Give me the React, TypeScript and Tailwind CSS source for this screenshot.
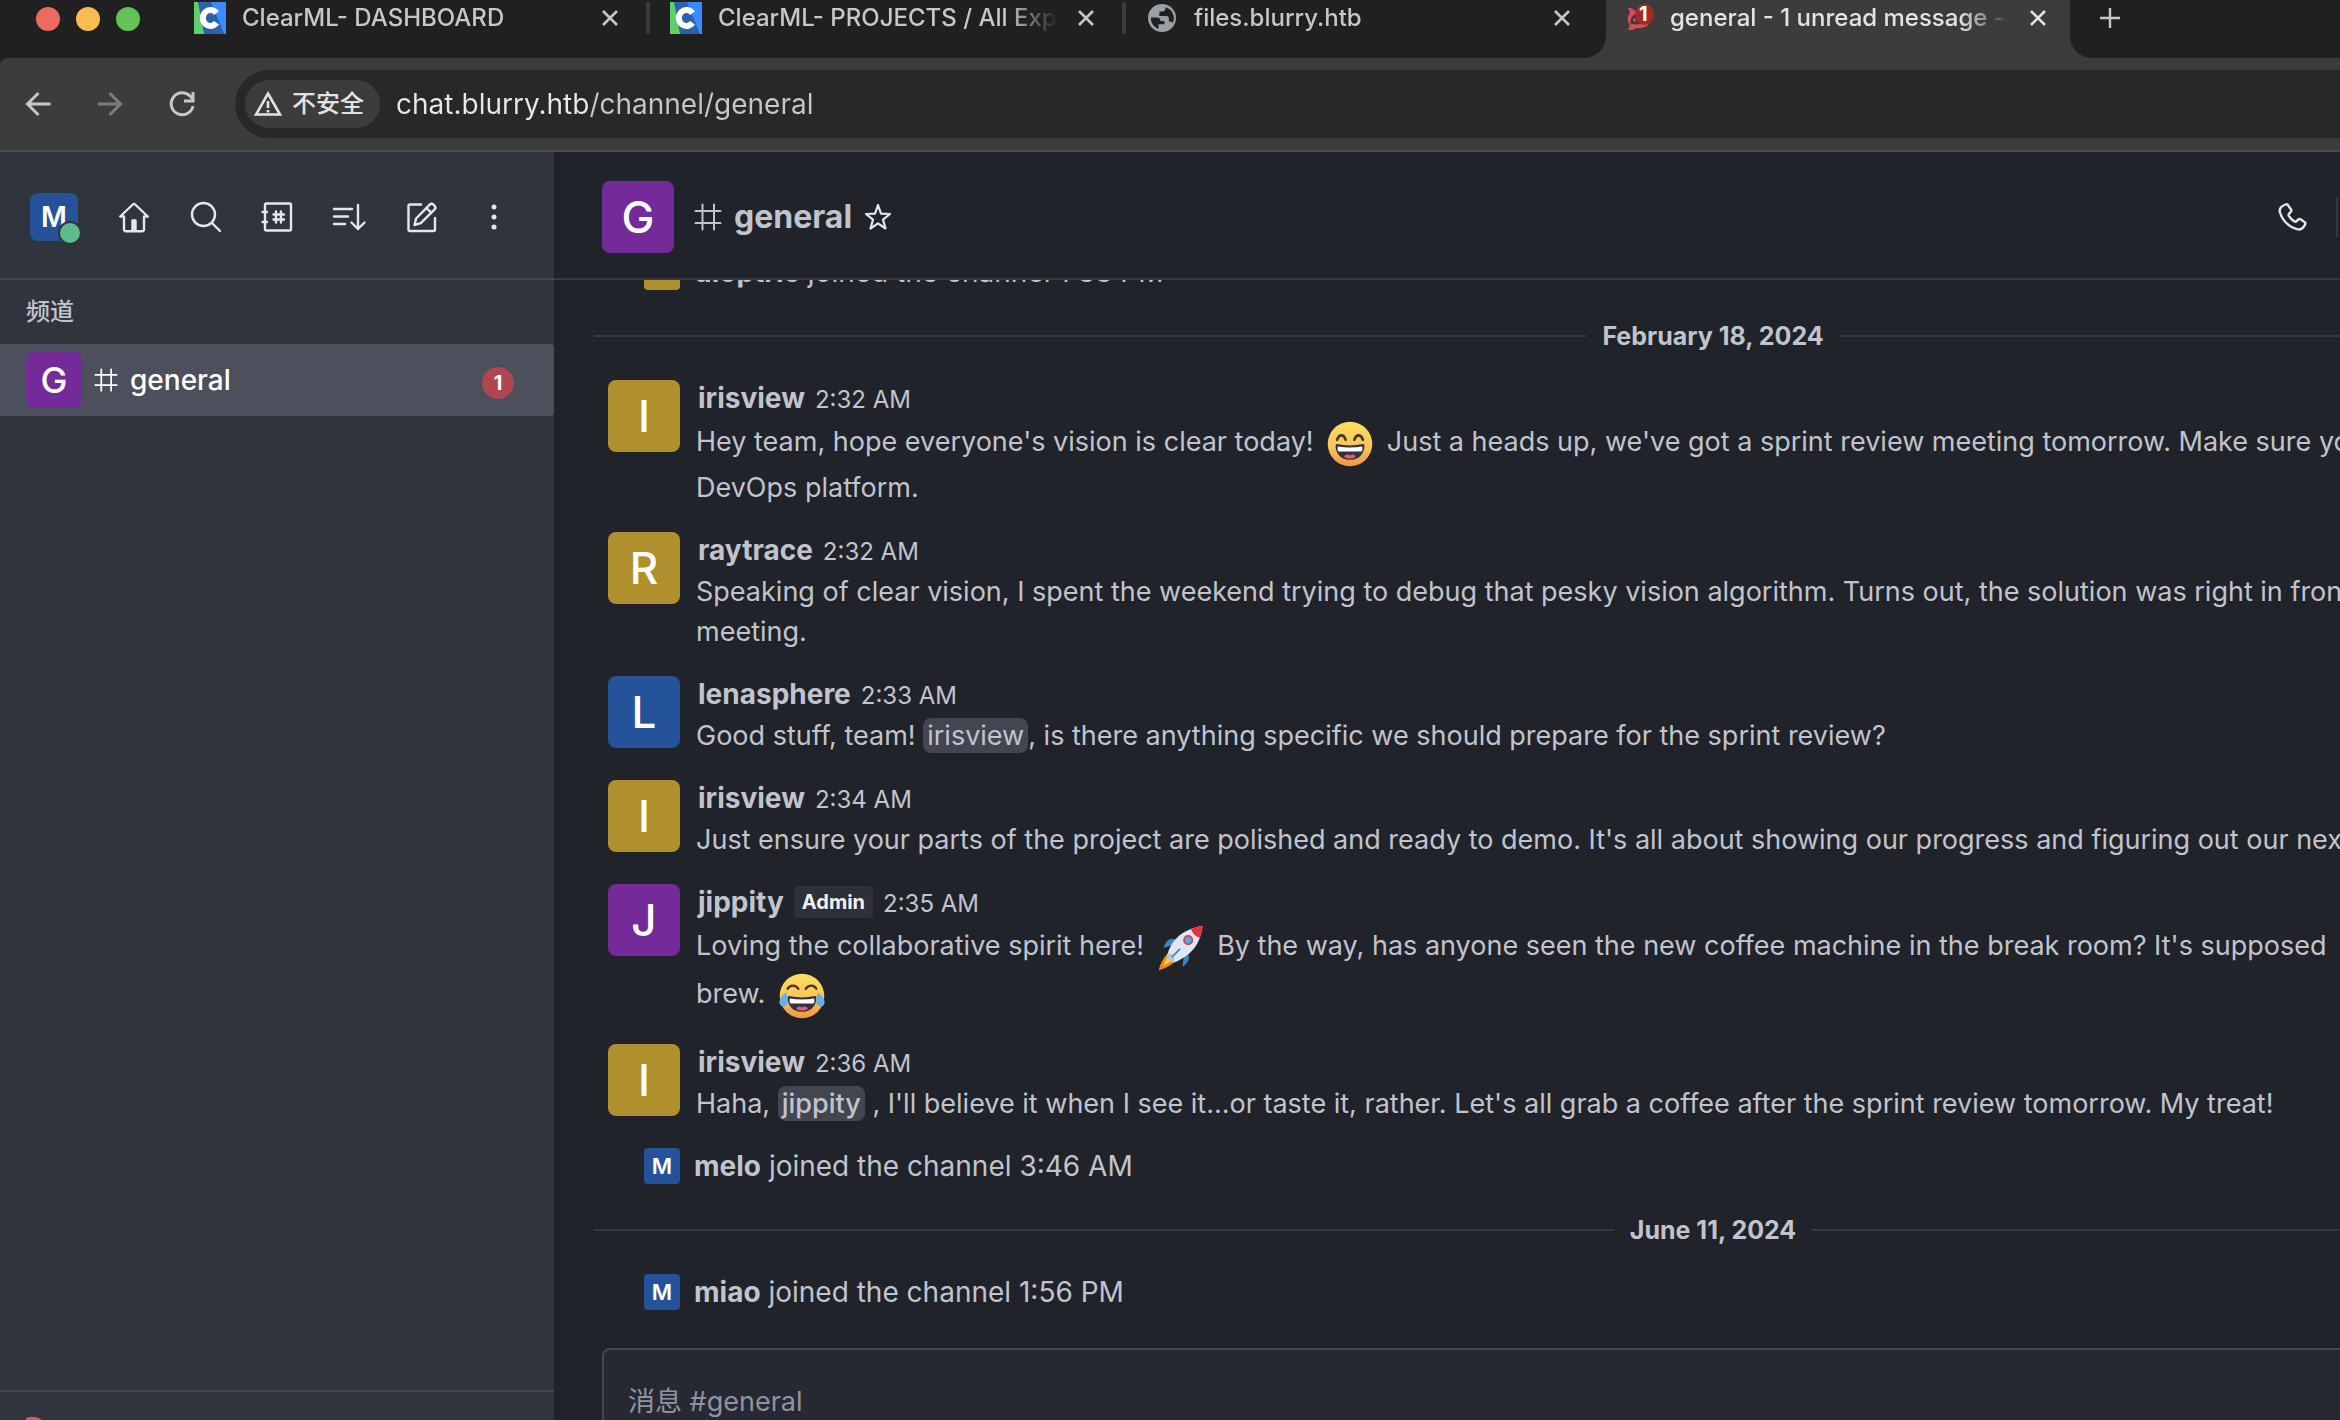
import React from "react";

type IconProps = { children: React.ReactNode; className?: string; box?: number; stroke?: number };

function Icon({ children, className = "size-10", box = 40, stroke = 2 }: IconProps) {
  return (
    <svg
      viewBox={`0 0 ${box} ${box}`}
      className={`shrink-0 ${className}`}
      fill="none"
      stroke="currentColor"
      strokeWidth={stroke}
      strokeLinecap="round"
      strokeLinejoin="round"
      aria-hidden="true"
    >
      {children}
    </svg>
  );
}

/* ---------- browser chrome ---------- */

const CloseIcon = () => (
  <Icon className="size-4" box={16} stroke={2.6}>
    <path d="M1 1 15 15M15 1 1 15" strokeLinecap="butt" />
  </Icon>
);

const ClearMlIcon = () => (
  <svg viewBox="0 0 32 32" className="size-8 shrink-0" aria-hidden="true">
    <path d="M0 0h32v32H0z" fill="#2b62ad" />
    <path d="M0 0h4l6 32H0z" fill="#5fd068" />
    <path d="M17 0h15v32h-2z" fill="#3a8bfd" />
    <path d="M22.5 11.2A7.6 8 0 1 0 22.5 20.8" fill="none" stroke="#fff" strokeWidth="6" />
  </svg>
);

const GlobeIcon = () => (
  <svg viewBox="0 0 28 28" className="size-7 shrink-0" aria-hidden="true">
    <circle cx="14" cy="14" r="14" fill="#9aa0a6" />
    <path
      d="M3 13.5h6.500c1.800.2 3 1.600 3 3.500h3c.8 0 1 .6 1 1.500v1.800h-6V25A11.300 11.300 0 0 1 3 13.500ZM17.500 3.200v1.300c0 1.600-1.400 2.900-3 2.900h-3v3c0 .8-.7 1.500-1.500 1.500v0h8.500c1.600 0 2.400 1.200 2.400 2.800v2.800h1.500c1.100 0 1.800.6 2.300 1.500A11.300 11.300 0 0 0 17.500 3.200Z"
      fill="#202020"
    />
  </svg>
);

const RocketChatIcon = () => (
  <svg viewBox="0 0 28 32" className="h-8 w-7 shrink-0" aria-hidden="true">
    <path
      d="M2 6c3-.5 5 .8 7 3 9-2 16 2 16 8s-7 10-15 9c-2 2-5 2.500-8.500 1.500 2.500-2 2.500-4 1.500-6C1.500 19 1 15 3.500 12 4.500 10 3 8 2 6Z"
      fill="#e0495a"
    />
    <path d="M7 13.500c3-3 13-2.500 14 3 .5 4-7 7-14.500 5.500-1-.2-1.500.8-2 1 .5-3-1-6 2.500-9.500Z" fill="#3c3c3c" />
    <circle cx="8.500" cy="18" r="1.500" fill="#e0495a" />
    <circle cx="13" cy="18" r="1.500" fill="#e0495a" />
    <ellipse cx="18.500" cy="12.500" rx="9.500" ry="10.500" fill="#a52a22" />
  </svg>
);

const CornerCurve = ({ className }: { className: string }) => (
  <svg viewBox="0 0 22 22" className={`absolute bottom-0 size-5.5 ${className}`} aria-hidden="true">
    <path d="M22 0v22H0A22 22 0 0 0 22 0Z" fill="#3c3c3c" />
  </svg>
);

type Tab = { title: string; icon: React.ReactNode; iconBox: string };

const tabs: Tab[] = [
  { title: "ClearML- DASHBOARD", icon: <ClearMlIcon />, iconBox: "w-12" },
  { title: "ClearML- PROJECTS / All Experiments", icon: <ClearMlIcon />, iconBox: "w-12" },
  { title: "files.blurry.htb", icon: <GlobeIcon />, iconBox: "w-12 pl-0.5" },
];

const tabFade = "[mask-image:linear-gradient(to_right,black_85%,transparent)]";

function TabStrip() {
  return (
    <div className="relative flex h-[58px] shrink-0 items-start bg-[#202020]">
      <div className="flex h-[38px] w-[194px] shrink-0 items-center gap-4 pl-9">
        <span className="size-6 rounded-full bg-[#ed6a5e]" />
        <span className="size-6 rounded-full bg-[#f5be4f]" />
        <span className="size-6 rounded-full bg-[#62c454]" />
      </div>
      {tabs.map((tab, i) => (
        <div key={tab.title} className="flex h-9 w-[476px] shrink-0 items-center">
          <span className={`flex shrink-0 items-center ${tab.iconBox}`}>{tab.icon}</span>
          <span className={`w-[340px] overflow-hidden text-2xl leading-9 font-medium whitespace-nowrap text-[#c7c7c7] ${tabFade}`}>
            {tab.title}
          </span>
          <button type="button" aria-label={`Close ${tab.title}`} className="ml-5 text-[#c7c7c7]">
            <CloseIcon />
          </button>
          {i < 2 && <span className="ml-7 h-8 w-1 rounded bg-[#3c3c3c]" />}
        </div>
      ))}
      <div className="relative -ml-4 flex h-full w-[464px] shrink-0 items-start bg-[#3c3c3c]">
        <CornerCurve className="right-full" />
        <CornerCurve className="left-full -scale-x-100" />
        <div className="flex h-9 items-center pl-5">
          <span className="relative flex w-11 shrink-0">
            <RocketChatIcon />
            <span className="absolute left-[13px] -top-1 text-xl leading-8 font-bold text-white">1</span>
          </span>
          <span className={`w-[340px] overflow-hidden text-2xl leading-9 font-medium whitespace-nowrap text-[#e3e3e3] ${tabFade}`}>
            general - 1 unread message - blurry
          </span>
          <button type="button" aria-label="Close general" className="ml-5 text-[#e3e3e3]">
            <CloseIcon />
          </button>
        </div>
      </div>
      <button type="button" aria-label="New tab" className="ml-[30px] flex h-9 items-center text-[#c7c7c7]">
        <Icon className="size-5" box={20} stroke={2.4}>
          <path d="M10 0v20M0 10h20" strokeLinecap="butt" />
        </Icon>
      </button>
    </div>
  );
}

function AddressBar() {
  return (
    <div className="bg-[#202020]">
      <div className="flex h-[94px] items-center rounded-tl-lg border-b-2 border-[#4a4a4a] bg-[#3c3c3c]">
        <div className="flex w-[235px] shrink-0 items-center gap-8 pl-[18px]">
          <button type="button" aria-label="Back" className="text-[#c7c7c7]">
            <Icon stroke={3}>
              <path d="M32.500 20H10M20.500 9l-11 11 11 11" strokeLinecap="butt" strokeLinejoin="miter" />
            </Icon>
          </button>
          <button type="button" aria-label="Forward" className="text-[#7c7c7c]">
            <Icon stroke={3}>
              <path d="M8 20h22M19.500 9l11 11-11 11" strokeLinecap="butt" strokeLinejoin="miter" />
            </Icon>
          </button>
          <button type="button" aria-label="Reload" className="text-[#c7c7c7]">
            <Icon stroke={3}>
              <path d="M31 22a11 11 0 1 1-3-10l3 3M31 8v9h-9" strokeLinecap="butt" strokeLinejoin="miter" />
            </Icon>
          </button>
        </div>
        <div className="flex h-[68px] min-w-0 flex-1 items-center rounded-l-full bg-[#282828] pl-2.5">
          <button
            type="button"
            className="flex h-12 shrink-0 items-center gap-2 rounded-full bg-[#3c3c3c] pr-4 pl-[7px] text-2xl leading-9 font-medium text-[#e3e3e3]"
          >
            <svg viewBox="0 0 32 32" className="size-8" fill="none" stroke="currentColor" strokeWidth="2.600" aria-hidden="true">
              <path d="M16 5.500 28 26.500H4Z" />
              <path d="M16 13v7M16 22v2.500" />
            </svg>
            不安全
          </button>
          <input
            type="text"
            aria-label="Address"
            defaultValue="chat.blurry.htb/channel/general"
            className="ml-4 min-w-0 flex-1 bg-[linear-gradient(to_right,#e8e8e8_194px,#c7c7c7_194px)] bg-clip-text text-[28px] leading-10 text-transparent outline-none"
          />
        </div>
      </div>
    </div>
  );
}

/* ---------- chat ---------- */

const HashIcon = ({ className }: { className: string }) => (
  <Icon className={className} box={28} stroke={2}>
    <path d="M8.500 1.500v25M20 1.500v25M1.500 8h25M1.500 20h25" />
  </Icon>
);

const toolbar: { label: string; icon: React.ReactNode }[] = [
  {
    label: "Home",
    icon: (
      <Icon stroke={2.4}>
        <path d="M10 19.500v13a1.800 1.800 0 0 0 1.800 1.800h16.400a1.800 1.800 0 0 0 1.800-1.800v-13h3.800L21.200 7.500a1.700 1.700 0 0 0-2.400 0L6.200 19.500Z" />
        <path d="M18.500 33v-9.500h3V33Z" fill="currentColor" />
      </Icon>
    ),
  },
  {
    label: "Search",
    icon: (
      <Icon stroke={2.4}>
        <circle cx="17.500" cy="17.500" r="11.500" />
        <path d="m26 26 8 8" />
      </Icon>
    ),
  },
  {
    label: "Directory",
    icon: (
      <Icon stroke={2.4}>
        <rect x="7" y="6.500" width="26" height="27" rx="1.500" />
        <path d="M4.500 15H9M4.500 25H9" />
        <path d="M18 14.500v11M23 14.500v11M15.500 17.500H26M15.500 22.500H26" />
      </Icon>
    ),
  },
  {
    label: "Sort",
    icon: (
      <Icon stroke={2.4}>
        <path d="M4 12H22M4 19.500H18M4 27H15M28 8v24M21.500 25.500 28 32l6.500-6.500" />
      </Icon>
    ),
  },
  {
    label: "Create new",
    icon: (
      <Icon stroke={2.4}>
        <path d="M19 7.500H8A1.500 1.500 0 0 0 6.500 9v23.500A1.500 1.500 0 0 0 8 34h23.500a1.500 1.500 0 0 0 1.500-1.500V21" />
        <path d="M27.500 7.800a3 3 0 0 1 4.200 0l.7.7a3 3 0 0 1 0 4.200L18.800 26.200 12.500 28l1.600-6.500ZM24.500 11l4.800 4.800" />
      </Icon>
    ),
  },
  {
    label: "More",
    icon: (
      <Icon stroke={0}>
        <g fill="currentColor">
          <circle cx="20" cy="10" r="2.500" />
          <circle cx="20" cy="20" r="2.500" />
          <circle cx="20" cy="30" r="2.500" />
        </g>
      </Icon>
    ),
  },
];

function Sidebar() {
  return (
    <aside className="flex w-[554px] shrink-0 flex-col bg-[#2f343d]">
      <div className="flex h-32 shrink-0 items-center border-b-2 border-[#414650] pt-1 pl-[30px] text-[#e4e7ea]">
        <button
          type="button"
          aria-label="User menu"
          className="relative mr-9 flex size-12 items-center justify-center rounded-lg bg-[#245399] text-[28px] leading-10 font-semibold text-white"
        >
          M
          <span className="absolute -right-1 -bottom-1 size-6 rounded-full border-2 border-[#2f343d] bg-[#5dbb8c]" />
        </button>
        <div className="flex gap-8">
          {toolbar.map((t) => (
            <button type="button" key={t.label} aria-label={t.label}>
              {t.icon}
            </button>
          ))}
        </div>
      </div>
      <h2 className="px-[26px] py-3.5 text-2xl leading-9 font-medium text-[#c1c4cc]">频道</h2>
      <a href="#general" className="flex h-18 items-center rounded-r bg-[#4c505c] pr-10 pl-[26px] text-white">
        <span className="flex size-14 items-center justify-center rounded-lg bg-[#752a99] text-[36px] leading-10 font-medium">G</span>
        <HashIcon className="ml-3 size-6" />
        <span className="ml-3 flex-1 text-[28px] leading-10 font-medium">general</span>
        <span className="mt-1.5 flex size-8 items-center justify-center rounded-full bg-[#b04650] text-xl leading-8 font-bold">1</span>
      </a>
      <div className="mt-auto h-[30px] shrink-0 overflow-hidden border-t-2 border-[#414650] pt-6 pl-6">
        <svg viewBox="0 0 60 52" className="h-13 w-15" aria-hidden="true">
          <path d="M2 2c8-3 15 0 20 6 20-4 36 5 36 18S42 48 24 44C18 50 10 51 2 48Z" fill="#e05260" />
        </svg>
      </div>
    </aside>
  );
}

const avatarColors = {
  gold: "bg-[#b08f2d]",
  blue: "bg-[#245399]",
  purple: "bg-[#752a99]",
};
type Tone = keyof typeof avatarColors;

const GrinFace = ({ tears = false }: { tears?: boolean }) => (
  <svg
    viewBox="0 0 64 64"
    className="mx-1.5 my-px inline-block size-[46px] align-middle"
    role="img"
    aria-label={tears ? "joy" : "smile"}
  >
    <defs>
      <linearGradient id={tears ? "joyFace" : "smileFace"} x1="0" y1="0" x2="0" y2="1">
        <stop offset="0" stopColor="#fde05e" />
        <stop offset=".6" stopColor="#f8c15a" />
        <stop offset="1" stopColor="#ef9645" />
      </linearGradient>
    </defs>
    <circle cx="32" cy="32" r="31" fill={`url(#${tears ? "joyFace" : "smileFace"})`} />
    {tears ? (
      <path d="M12 22c3-6 11-6 15 0M37 22c4-6 12-6 15 0" fill="none" stroke="#4a3428" strokeWidth="3.200" strokeLinecap="round" />
    ) : (
      <path d="M14 26c3-8 9-8 12 0M38 26c3-8 9-8 12 0" fill="none" stroke="#4a3428" strokeWidth="3.600" strokeLinecap="round" />
    )}
    <path d="M14 32q18 4 36 0c2 0 2 2 2 4-1 11-9 18-20 18s-19-7-20-18c0-2 0-4 2-4Z" fill="#33333f" />
    <path d="M15 35.500q17 3 34 0 1 6-1.500 7h-31q-2.500-1-1.500-7Z" fill="#fff" />
    <path d="M24 50c1-4 6-4 8-2 2-2 7-2 8 2-5 3-11 3-16 0Z" fill="#e8596e" />
    {tears && (
      <g fill="#65b1ef">
        <path d="M10 27C4 31-1 38 1 43s10 5 11-2c.6-5-1-10-2-14Z" />
        <path d="M54 27c6 4 11 11 9 16s-10 5-11-2c-.6-5 1-10 2-14Z" />
      </g>
    )}
  </svg>
);

const RocketEmoji = () => (
  <svg viewBox="0 0 64 64" className="mx-1.5 my-px inline-block size-[46px] align-middle" role="img" aria-label="rocket">
    <path d="M24 20c-8-3-14 3-16 12l14-5ZM42 40c3 8-1 14-8 18l2-15Z" fill="#3f83c4" />
    <path d="M13 40C7 46 3 54 1 63c9-3 17-6 22-12Z" fill="#f58220" />
    <path d="M15 43c-4 4-6 9-8 14 5-2 9-5 12-9Z" fill="#fdd835" />
    <path d="M13 41C19 20 34 6 62 1c-3 28-18 42-39 51Z" fill="#dfe6ee" />
    <path d="M62 1C55 2 50 4 46 6c2 6 6 10 12 12 2-5 3-11 4-17Z" fill="#e6343a" />
    <path d="M13 41c2-2 4-2 7 1s4 6 3 10l-4 0-7-8Z" fill="#b8c3cf" />
    <circle cx="42" cy="21" r="7" fill="#d4404e" />
    <circle cx="42" cy="21" r="4.800" fill="#4fa8e8" />
    <path d="M30 34 20 44" stroke="#3f83c4" strokeWidth="2.500" strokeLinecap="round" />
  </svg>
);

const Mention = ({ children, strong = false }: { children: string; strong?: boolean }) => (
  <a href={`#${children}`} className={`rounded-lg bg-[#414650] px-1 py-px ${strong ? "font-medium" : ""}`}>
    {children}
  </a>
);

type MessageProps = { user: string; time: string; tone: Tone; admin?: boolean; lines: React.ReactNode[] };

function Message({ user, time, tone, admin, lines }: MessageProps) {
  return (
    <article className="flex gap-4 pt-4 pb-2 pl-3.5">
      <span
        className={`flex size-18 shrink-0 items-center justify-center rounded-lg text-[44px] leading-none font-medium text-white ${avatarColors[tone]}`}
      >
        {user[0].toUpperCase()}
      </span>
      <div>
        <header className="mb-1 flex h-9 items-baseline gap-2.5 pl-0.5 leading-9">
          <span className="text-[28px] font-bold">{user}</span>
          {admin && (
            <span className="self-center rounded bg-[#2d3038] px-2 text-xl leading-8 font-bold text-[#f0f1f3]">Admin</span>
          )}
          <time className="text-2xl leading-9">{time}</time>
        </header>
        <div className="text-[27px] leading-10 whitespace-nowrap">
          {lines.map((line, i) => (
            <p key={i}>{line}</p>
          ))}
        </div>
      </div>
    </article>
  );
}

function Joined({ user, time, tone }: { user: string; time: string; tone: Tone }) {
  return (
    <div className="flex items-center gap-3.5 pt-4 pb-2 pl-[50px]">
      <span className={`flex size-9 items-center justify-center rounded text-[22px] leading-none font-semibold text-white ${avatarColors[tone]}`}>
        {user[0].toUpperCase()}
      </span>
      <p className="text-[28px] leading-9">
        <b>{user}</b> joined the channel <time>{time}</time>
      </p>
    </div>
  );
}

function DateDivider({ children }: { children: string }) {
  return (
    <div className="mt-2.5 flex h-14 items-center gap-4">
      <span className="h-0.5 flex-1 bg-[#353940]" />
      <span className="text-[25px] leading-9 font-bold">{children}</span>
      <span className="h-0.5 flex-1 bg-[#353940]" />
    </div>
  );
}

function Room() {
  return (
    <main className="flex min-w-0 flex-1 flex-col overflow-hidden bg-[#20232a] text-[#c1c4cc]">
      <header className="flex h-32 shrink-0 items-center border-b-2 border-[#353940] pt-1 pr-0.5 pl-12">
        <span className="flex size-18 items-center justify-center rounded-lg bg-[#752a99] text-[44px] leading-none font-medium text-white">G</span>
        <HashIcon className="ml-5 size-7" />
        <h1 className="ml-3 text-[32px] leading-10 font-bold">general</h1>
        <button type="button" aria-label="Favorite" className="ml-2.5 text-[#e4e7ea]">
          <Icon className="size-8" box={32} stroke={2.2}>
            <path d="m16 4 3 8.600 9 .4-7 5.600 2.500 8.900L16 22.400l-7.500 5.100 2.500-8.900L4 13l9-.4Z" />
          </Icon>
        </button>
        <button type="button" aria-label="Call" className="ml-auto text-[#e4e7ea]">
          <Icon stroke={2.4}>
            <path d="M13.500 7.500c1-.5 1.800-.3 2.500.6l3 4.400c.5.8.5 1.500-.1 2.200l-2 2.200c-.5.600-.5 1.200-.1 1.900 1.500 2.300 3.300 4.200 5.600 5.600.7.4 1.400.4 1.900-.1l2-1.800c.700-.600 1.500-.700 2.300-.2l3.900 2.800c.9.600 1.100 1.500.6 2.500-1.600 3.500-4.500 5.600-8.200 4.500C16.500 29.500 10.500 23.500 8 15.500c-1.200-3.800 2-6.600 5.500-8Z" />
          </Icon>
        </button>
        <span className="ml-6 h-10 w-0.5 bg-[#353940]" />
      </header>
      <section className="flex min-h-0 w-[128%] flex-1 flex-col justify-end overflow-hidden pr-2 pb-[30px] pl-10 *:shrink-0">
        <Joined user="dioptric" time="1:33 PM" tone="gold" />
        <DateDivider>February 18, 2024</DateDivider>
        <Message
          user="irisview"
          time="2:32 AM"
          tone="gold"
          lines={[
            <>
              Hey team, hope everyone's vision is clear today! <GrinFace /> Just a heads up, we've got a sprint review meeting tomorrow. Make sure you
            </>,
            "DevOps platform.",
          ]}
        />
        <Message
          user="raytrace"
          time="2:32 AM"
          tone="gold"
          lines={[
            "Speaking of clear vision, I spent the weekend trying to debug that pesky vision algorithm. Turns out, the solution was right in front",
            "meeting.",
          ]}
        />
        <Message
          user="lenasphere"
          time="2:33 AM"
          tone="blue"
          lines={[
            <>
              Good stuff, team! <Mention>irisview</Mention>, is there anything specific we should prepare for the sprint review?
            </>,
          ]}
        />
        <Message
          user="irisview"
          time="2:34 AM"
          tone="gold"
          lines={[
            "Just ensure your parts of the project are polished and ready to demo. It's all about showing our progress and figuring out our next",
          ]}
        />
        <Message
          user="jippity"
          time="2:35 AM"
          tone="purple"
          admin
          lines={[
            <>
              Loving the collaborative spirit here! <RocketEmoji /> By the way, has anyone seen the new coffee machine in the break room? It's supposed
            </>,
            <>
              brew. <GrinFace tears />
            </>,
          ]}
        />
        <Message
          user="irisview"
          time="2:36 AM"
          tone="gold"
          lines={[
            <>
              Haha, <Mention strong>jippity</Mention> , I'll believe it when I see it...or taste it, rather. Let's all grab a coffee after the sprint review tomorrow. My treat!
            </>,
          ]}
        />
        <Joined user="melo" time="3:46 AM" tone="blue" />
        <DateDivider>June 11, 2024</DateDivider>
        <Joined user="miao" time="1:56 PM" tone="blue" />
      </section>
      <textarea
        aria-label="Message"
        placeholder="消息 #general"
        className="ml-12 block h-[72px] shrink-0 resize-none overflow-hidden rounded-tl-lg border-t-2 border-l-2 border-[#414650] bg-[#262931] px-6 pt-8 text-[27px] leading-10 placeholder:text-[#9094a0]"
      />
    </main>
  );
}

export default function App() {
  return (
    <div className="flex h-screen flex-col overflow-hidden bg-[#20232a] font-[Inter,'Noto_Sans_CJK_SC',sans-serif]">
      <TabStrip />
      <AddressBar />
      <div className="flex min-h-0 flex-1">
        <Sidebar />
        <Room />
      </div>
    </div>
  );
}
